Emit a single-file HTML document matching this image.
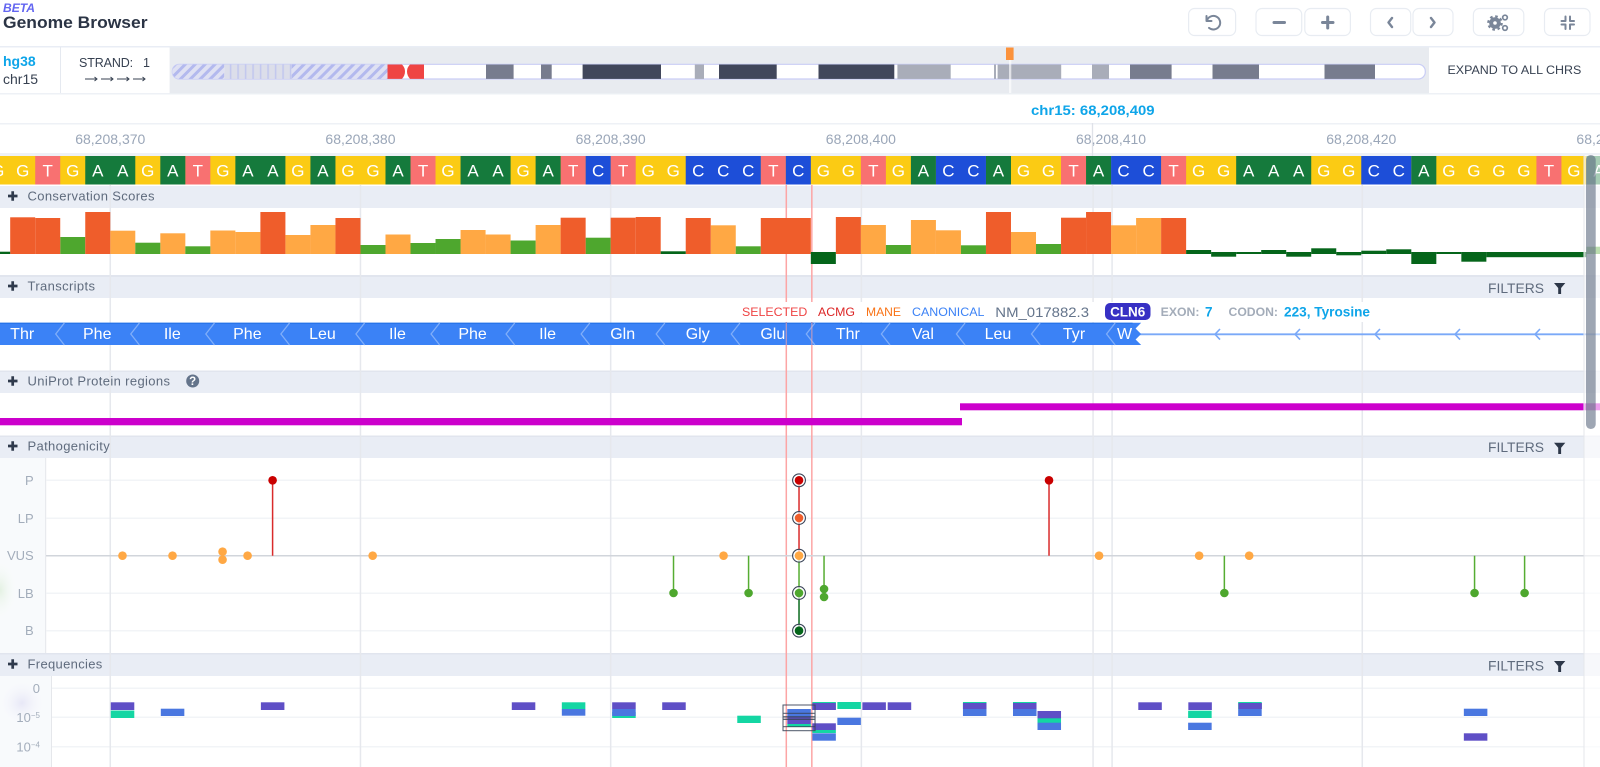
<!DOCTYPE html>
<html lang="en"><head><meta charset="utf-8"><title>Genome Browser</title>
<style>
html,body{margin:0;padding:0;background:#fff;width:1600px;height:767px;overflow:hidden}
svg{display:block;font-family:"Liberation Sans",Arial,sans-serif}
.sec{font-size:13px;fill:#5f6b7d}
.tick{font-size:14px;fill:#9aa6b8;text-anchor:middle}
.ax{font-size:13px;fill:#a3adbb;text-anchor:end}
.fil{font-size:14px;fill:#5f6b7d}
.aa{font-size:16px;fill:#fff;text-anchor:middle}
.btn{fill:#fff;stroke:#e8ecf2;stroke-width:1.2}
.ic{fill:none;stroke:#7a8699;stroke-linecap:round;stroke-linejoin:round}
</style></head><body>
<svg width="1600" height="767" viewBox="0 0 1600 767" xmlns="http://www.w3.org/2000/svg">
<defs>
<pattern id="hatch" width="7" height="7" patternUnits="userSpaceOnUse" patternTransform="rotate(45)"><rect width="7" height="7" fill="#dfe1f3"/><rect width="3" height="7" fill="#b3b9ee"/></pattern>
<pattern id="vst" width="7.500" height="10" patternUnits="userSpaceOnUse" x="224.300"><rect width="7.500" height="10" fill="#dcdeea"/><rect x="5.500" width="1.600" height="10" fill="#c3c8ee"/></pattern>
<radialGradient id="gg"><stop offset="0" stop-color="#cfe8c8" stop-opacity=".5"/><stop offset="1" stop-color="#fff" stop-opacity="0"/></radialGradient>
<radialGradient id="pg"><stop offset="0" stop-color="#d9d8f2" stop-opacity=".55"/><stop offset="1" stop-color="#fff" stop-opacity="0"/></radialGradient>
</defs>
<rect width="1600" height="767" fill="#fff"/>

<!-- header -->
<text x="3" y="12" font-size="12" font-style="italic" font-weight="bold" fill="#6366f1" textLength="32" lengthAdjust="spacingAndGlyphs">BETA</text>
<text x="3" y="28" font-size="17" font-weight="bold" fill="#2b3445" textLength="144.500" lengthAdjust="spacingAndGlyphs">Genome Browser</text>
<rect class="btn" x="1188.600" y="8.500" width="47" height="27" rx="6"/>
<rect class="btn" x="1256" y="8.500" width="45.700" height="27" rx="6"/>
<rect class="btn" x="1304.800" y="8.500" width="45.600" height="27" rx="6"/>
<rect class="btn" x="1370.500" y="8.500" width="40.200" height="27" rx="6"/>
<rect class="btn" x="1413" y="8.500" width="40" height="27" rx="6"/>
<rect class="btn" x="1473.400" y="8.500" width="50.400" height="27" rx="6"/>
<rect class="btn" x="1544.500" y="8.500" width="45.500" height="27" rx="6"/>
<path class="ic" stroke-width="2" d="M1206.500 16v5h5M1206.800 21A6.800 6.800 0 1 1 1209 27.900"/>
<path class="ic" stroke-width="3" d="M1274 22.500h10.500M1322.500 22.500h10.500M1327.700 17v11"/>
<path class="ic" stroke-width="2.400" d="M1392 18l-3.500 4.500 3.500 4.500M1431 18l3.500 4.500-3.500 4.500"/>
<circle cx="1495" cy="23" r="3.800" fill="none" stroke="#7a8699" stroke-width="4"/>
<circle cx="1495" cy="23" r="6.700" fill="none" stroke="#7a8699" stroke-width="2.200" stroke-dasharray="2.600 2.660"/>
<circle cx="1505" cy="17.500" r="2.300" fill="none" stroke="#7a8699" stroke-width="1.700"/>
<circle cx="1505" cy="28" r="2.300" fill="none" stroke="#7a8699" stroke-width="1.700"/>
<path class="ic" stroke-width="2" d="M1565.500 16.500v4.500h-4M1570 16.500v4.500h4M1565.500 29v-4.500h-4M1570 29v-4.500h4"/>

<rect x="0" y="46" width="1600" height="1.500" fill="#e9edf5"/>
<rect x="0" y="93" width="1600" height="1.500" fill="#eef1f6"/>
<rect x="60" y="47" width="1" height="46" fill="#e5e9f0"/>
<text x="3" y="66" font-size="14" font-weight="bold" fill="#0ea5e9">hg38</text>
<text x="3" y="84" font-size="14" fill="#374151">chr15</text>
<text x="79" y="67" font-size="12.500" fill="#374151" textLength="71" xml:space="preserve">STRAND:   1</text>
<path fill="none" stroke="#374151" stroke-width="1" d="M85 79h12M94.500 77l2.500 2-2.500 2M101 79h12M110.500 77l2.500 2-2.500 2M117 79h12M126.500 77l2.500 2-2.500 2M133 79h12M142.500 77l2.500 2-2.500 2"/>

<!-- ideogram -->
<rect x="169.600" y="47.300" width="1259.400" height="46" fill="#e8ebf0"/>
<rect x="172.300" y="64.300" width="1253" height="14.700" rx="7" fill="#fff" stroke="#c9cdf5" stroke-width="1.200"/>
<path d="M224.300 64.500H179.500a7 7 0 0 0 0 14.400h44.800z" fill="url(#hatch)"/>
<rect x="224.300" y="64.500" width="67.300" height="14.400" fill="url(#vst)"/>
<rect x="291.600" y="64.500" width="96" height="14.400" fill="url(#hatch)"/>
<path d="M387.500 64.500H402q3 3 3 7t-3 7.400H387.500z" fill="#ef4444"/>
<path d="M424 64.500H410q-3 3-3 7t3 7.400H424z" fill="#ef4444"/>
<g fill="#777c8e"><rect x="486" y="64.500" width="27.600" height="14.400"/><rect x="541" y="64.500" width="10.700" height="14.400"/><rect x="1130" y="64.500" width="41.600" height="14.400"/><rect x="1212.500" y="64.500" width="46.500" height="14.400"/><rect x="1324.500" y="64.500" width="50.500" height="14.400"/></g>
<g fill="#41475b"><rect x="582.600" y="64.500" width="78.400" height="14.400"/><rect x="719" y="64.500" width="57.700" height="14.400"/><rect x="818.500" y="64.500" width="75.800" height="14.400"/></g>
<g fill="#a9adb9"><rect x="694.800" y="64.500" width="9.200" height="14.400"/><rect x="897.400" y="64.500" width="53.300" height="14.400"/><rect x="994" y="64.500" width="2" height="14.400"/><rect x="997.600" y="64.500" width="63.600" height="14.400"/><rect x="1092" y="64.500" width="17" height="14.400"/></g>
<rect x="1009" y="60" width="2.300" height="33" fill="#fff" opacity=".65"/>
<rect x="1006" y="47.500" width="7.600" height="12.500" fill="#fb923c"/>
<text x="1447.500" y="74" font-size="12" fill="#374151" textLength="133.800" lengthAdjust="spacingAndGlyphs">EXPAND TO ALL CHRS</text>

<text x="1031" y="115" font-size="14" font-weight="bold" fill="#0ea5e9" textLength="123.600" lengthAdjust="spacingAndGlyphs">chr15: 68,208,409</text>
<rect x="0" y="123" width="1600" height="1.500" fill="#eef1f6"/>
<rect x="0" y="153" width="1600" height="3" fill="#eef1f6"/>
<path d="M1092.500 123V156" stroke="#dfe2e8" stroke-width="1.300"/>

<g transform="translate(-0.320 0) scale(1.0008 1)">
<text class="tick" x="110.500" y="144">68,208,370</text>
<text class="tick" x="360.500" y="144">68,208,380</text>
<text class="tick" x="610.500" y="144">68,208,390</text>
<text class="tick" x="860.500" y="144">68,208,400</text>
<text class="tick" x="1110.500" y="144">68,208,410</text>
<text class="tick" x="1360.500" y="144">68,208,420</text>
<text class="tick" x="1610.500" y="144">68,208,430</text>

<!-- bases -->
<rect x="0" y="156" width="1600" height="28.500" fill="#fbcb14"/>
<g fill="#f87171"><rect x="35.500" y="156" width="25" height="28.500"/><rect x="185.500" y="156" width="25" height="28.500"/><rect x="410.500" y="156" width="25" height="28.500"/><rect x="560.500" y="156" width="25" height="28.500"/><rect x="610.500" y="156" width="25" height="28.500"/><rect x="760.500" y="156" width="25" height="28.500"/><rect x="860.500" y="156" width="25" height="28.500"/><rect x="1060.500" y="156" width="25" height="28.500"/><rect x="1160.500" y="156" width="25" height="28.500"/><rect x="1535.500" y="156" width="25" height="28.500"/></g>
<g fill="#157a3c"><rect x="85.500" y="156" width="50" height="28.500"/><rect x="160.500" y="156" width="25" height="28.500"/><rect x="235.500" y="156" width="50" height="28.500"/><rect x="310.500" y="156" width="25" height="28.500"/><rect x="385.500" y="156" width="25" height="28.500"/><rect x="460.500" y="156" width="50" height="28.500"/><rect x="535.500" y="156" width="25" height="28.500"/><rect x="910.500" y="156" width="25" height="28.500"/><rect x="985.500" y="156" width="25" height="28.500"/><rect x="1085.500" y="156" width="25" height="28.500"/><rect x="1235.500" y="156" width="75" height="28.500"/><rect x="1410.500" y="156" width="25" height="28.500"/><rect x="1585.500" y="156" width="15" height="28.500"/></g>
<g fill="#1d4ed8"><rect x="585.500" y="156" width="25" height="28.500"/><rect x="685.500" y="156" width="75" height="28.500"/><rect x="785.500" y="156" width="25" height="28.500"/><rect x="935.500" y="156" width="50" height="28.500"/><rect x="1110.500" y="156" width="50" height="28.500"/><rect x="1360.500" y="156" width="50" height="28.500"/></g>
<text y="176.500" font-size="17" fill="#fff" text-anchor="middle" x="-2 23 48 73 98 123 148 173 198 223 248 273 298 323 348 373 398 423 448 473 498 523 548 573 598 623 648 673 698 723 748 773 798 823 848 873 898 923 948 973 998 1023 1048 1073 1098 1123 1148 1173 1198 1223 1248 1273 1298 1323 1348 1373 1398 1423 1448 1473 1498 1523 1548 1573 1598">GGTGAAGATGAAGAGGATGAAGATCTGGCCCTCGGTGACCAGGTACCTGGAAAGGCCAGGGGTGA</text>
</g>

<!-- section headers -->
<g fill="#e9edf5"><rect x="0" y="186" width="1600" height="22"/><rect x="0" y="275" width="1600" height="23"/><rect x="0" y="370.500" width="1600" height="22.500"/><rect x="0" y="435.500" width="1600" height="22.500"/><rect x="0" y="653" width="1600" height="23"/></g>
<g fill="#e1e5ee"><rect x="0" y="275" width="1600" height="2"/><rect x="0" y="370.500" width="1600" height="1.500"/><rect x="0" y="435.500" width="1600" height="1.500"/><rect x="0" y="653" width="1600" height="1.500"/></g>

<!-- axes -->
<rect x="0" y="458" width="45.700" height="195" fill="#f8fafc"/>
<rect x="0" y="676" width="51.500" height="91" fill="#f8fafc"/>
<ellipse cx="0" cy="590" rx="18" ry="32" fill="url(#gg)"/>
<circle cx="22" cy="703" r="26" fill="url(#pg)"/>
<rect x="45.200" y="458" width="1" height="195" fill="#e5e7eb"/>
<rect x="51" y="676" width="1" height="91" fill="#e5e7eb"/>
<g fill="#f2f4f7"><rect x="46" y="479.500" width="1554" height="1.500"/><rect x="46" y="517.500" width="1554" height="1.500"/><rect x="46" y="592.500" width="1554" height="1.500"/><rect x="46" y="630" width="1554" height="1.500"/><rect x="52" y="687.500" width="1548" height="1.500"/><rect x="52" y="716.500" width="1548" height="1.500"/><rect x="52" y="746" width="1548" height="1.500"/></g>
<text class="ax" x="33.700" y="485">P</text><text class="ax" x="33.700" y="523">LP</text><text class="ax" x="33.700" y="560">VUS</text><text class="ax" x="33.700" y="598">LB</text><text class="ax" x="33.700" y="635">B</text>
<text class="ax" x="40" y="693">0</text>
<text class="ax" x="40" y="722">10<tspan font-size="8" dy="-4">−5</tspan></text>
<text class="ax" x="40" y="751.500">10<tspan font-size="8" dy="-4">−4</tspan></text>

<g transform="translate(-0.320 0) scale(1.0008 1)">
<!-- grid lines -->
<g stroke="#e6e8ed" stroke-width="1.500"><path d="M110.500 185V767M360.500 185V767M610.500 185V767M861 185V767M1111.500 185V767M1361.500 185V767M1092.500 185V767"/></g>
<g stroke="#fca5a5" stroke-width="1.500"><path d="M786 185V767M811.500 185V767"/></g>

<!-- conservation -->
<g fill="#ffa844">
<rect x="110.500" y="230.700" width="25" height="23.300"/><rect x="160.500" y="233.300" width="25" height="20.700"/><rect x="210.500" y="230.500" width="25" height="23.500"/><rect x="235.500" y="232" width="25" height="22"/><rect x="285.500" y="235" width="25" height="19"/><rect x="310.500" y="225" width="25" height="29"/><rect x="385.500" y="234.500" width="25" height="19.500"/><rect x="460.500" y="230" width="25" height="24"/><rect x="485.500" y="234.500" width="25" height="19.500"/><rect x="535.500" y="225" width="25" height="29"/><rect x="710.500" y="225.300" width="25" height="28.700"/><rect x="860.500" y="225" width="25" height="29"/><rect x="910.500" y="220" width="25" height="34"/><rect x="935.500" y="230.300" width="25" height="23.700"/><rect x="1010.500" y="232" width="25" height="22"/><rect x="1110.500" y="225.300" width="25" height="28.700"/><rect x="1135.500" y="218" width="25" height="36"/></g>
<g fill="#4ea72e">
<rect x="60.500" y="237" width="25" height="17"/><rect x="135.500" y="242.700" width="25" height="11.300"/><rect x="185.500" y="246.300" width="25" height="7.700"/><rect x="360.500" y="245" width="25" height="9"/><rect x="410.500" y="243" width="25" height="11"/><rect x="435.500" y="239" width="25" height="15"/><rect x="510.500" y="240.500" width="25" height="13.500"/><rect x="585.500" y="237.700" width="25" height="16.300"/><rect x="735.500" y="246.300" width="25" height="7.700"/><rect x="885.500" y="245" width="25" height="9"/><rect x="960.500" y="245.300" width="25" height="8.700"/><rect x="1035.500" y="244" width="25" height="10"/><rect x="1585.500" y="246.700" width="15" height="7.300"/></g>
<g fill="#ef5d2b">
<rect x="10.500" y="217.300" width="25" height="36.700"/><rect x="35.500" y="218" width="25" height="36"/><rect x="85.500" y="212" width="25" height="42"/><rect x="260.500" y="212" width="25" height="42"/><rect x="335.500" y="218" width="25" height="36"/><rect x="560.500" y="217.700" width="25" height="36.300"/><rect x="610.500" y="217.700" width="25" height="36.300"/><rect x="635.500" y="217" width="25" height="37"/><rect x="685.500" y="218" width="25" height="36"/><rect x="760.500" y="218" width="50" height="36"/><rect x="835.500" y="217" width="25" height="37"/><rect x="985.500" y="212" width="25" height="42"/><rect x="1060.500" y="217.700" width="25" height="36.300"/><rect x="1085.500" y="212" width="25" height="42"/><rect x="1160.500" y="218" width="25" height="36"/></g>
<g fill="#05651a">
<rect x="0" y="251.700" width="10.500" height="2.300"/><rect x="660.500" y="251.300" width="25" height="2.700"/><rect x="810.500" y="252" width="25" height="12"/><rect x="1185.500" y="250" width="25" height="4"/><rect x="1210.500" y="252" width="25" height="4.700"/><rect x="1235.500" y="252" width="25" height="2"/><rect x="1260.500" y="250" width="25" height="4"/><rect x="1285.500" y="252" width="25" height="4.700"/><rect x="1310.500" y="248.300" width="25" height="5.700"/><rect x="1335.500" y="252" width="25" height="3.300"/><rect x="1360.500" y="250.700" width="25" height="3.300"/><rect x="1385.500" y="249.300" width="25" height="4.700"/><rect x="1410.500" y="252" width="25" height="12"/><rect x="1435.500" y="252" width="25" height="2"/><rect x="1460.500" y="252" width="25" height="9.700"/><rect x="1485.500" y="252" width="100" height="5.200"/></g>
</g>

<!-- section titles -->
<g stroke="#2f3a4c" stroke-width="2.700"><path d="M8 196h9.500M12.700 191.300v9.400M8 286h9.500M12.700 281.300v9.400M8 381h9.500M12.700 376.300v9.400M8 446h9.500M12.700 441.300v9.400M8 664h9.500M12.700 659.300v9.400"/></g>
<text class="sec" x="27.500" y="200.500" textLength="127" lengthAdjust="spacing">Conservation Scores</text>
<text class="sec" x="27.500" y="290.500" textLength="67.500" lengthAdjust="spacing">Transcripts</text>
<text class="sec" x="27.500" y="385.500" textLength="142.500" lengthAdjust="spacing">UniProt Protein regions</text>
<text class="sec" x="27.500" y="450.500" textLength="82.200" lengthAdjust="spacing">Pathogenicity</text>
<text class="sec" x="27.500" y="668.500" textLength="74.800" lengthAdjust="spacing">Frequencies</text>
<circle cx="192.700" cy="381" r="6.500" fill="#64748b"/>
<text x="192.700" y="385.200" font-size="11.500" font-weight="bold" fill="#fff" text-anchor="middle">?</text>
<text class="fil" x="1488" y="293" textLength="56" lengthAdjust="spacingAndGlyphs">FILTERS</text>
<text class="fil" x="1488" y="452" textLength="56" lengthAdjust="spacingAndGlyphs">FILTERS</text>
<text class="fil" x="1488" y="670.500" textLength="56" lengthAdjust="spacingAndGlyphs">FILTERS</text>
<g fill="#2d3748"><path d="M1554 283h11.300l-4.200 5v6h-2.900v-6z"/><path d="M1554 442.700h11.300l-4.200 5v6.300h-2.900v-6.300z"/><path d="M1554 661h11.300l-4.200 5v6h-2.900v-6z"/></g>

<!-- transcript labels -->
<rect x="742" y="302" width="640" height="20" fill="#fff"/>
<text x="742" y="316" font-size="12" fill="#ef4444" textLength="65.300" lengthAdjust="spacingAndGlyphs">SELECTED</text>
<text x="818" y="316" font-size="12" fill="#dc2626" textLength="37" lengthAdjust="spacingAndGlyphs">ACMG</text>
<text x="866" y="316" font-size="12" fill="#f97316" textLength="35" lengthAdjust="spacingAndGlyphs">MANE</text>
<text x="912" y="316" font-size="12" fill="#3b82f6" textLength="72.400" lengthAdjust="spacingAndGlyphs">CANONICAL</text>
<text x="995.300" y="317" font-size="14" fill="#64748b" textLength="93.700" lengthAdjust="spacingAndGlyphs">NM_017882.3</text>
<rect x="1105" y="303" width="45.500" height="17" rx="5" fill="#3730c4"/>
<text x="1127.700" y="316.500" font-size="13.500" font-weight="bold" fill="#fff" text-anchor="middle">CLN6</text>
<text x="1160.700" y="316" font-size="12" font-weight="bold" fill="#a3acb9" textLength="38.800" lengthAdjust="spacingAndGlyphs">EXON:</text>
<text x="1205" y="316.500" font-size="13.500" font-weight="bold" fill="#0ea5e9">7</text>
<text x="1228.500" y="316" font-size="12" font-weight="bold" fill="#a3acb9" textLength="49.500" lengthAdjust="spacingAndGlyphs">CODON:</text>
<text x="1284" y="316.500" font-size="13.500" font-weight="bold" fill="#0ea5e9" textLength="86" lengthAdjust="spacingAndGlyphs">223, Tyrosine</text>

<!-- protein -->
<path d="M1136 334.300H1600" stroke="#7aa9f8" stroke-width="1.800"/>
<path d="M1220 329l-5 5.300 5 5.300M1300 329l-5 5.300 5 5.300M1380 329l-5 5.300 5 5.300M1460 329l-5 5.300 5 5.300M1540 329l-5 5.300 5 5.300" fill="none" stroke="#7aa9f8" stroke-width="1.600"/>
<g transform="translate(-0.320 0) scale(1.0008 1)">
<path d="M0 322.700H1140.600L1135 328.500l5.500 5.500-5.500 5.500 5.600 5.500H0z" fill="#3b82f6"/>
<rect x="0" y="322.700" width="1132" height="1" fill="#1f6fe6"/>
<path d="M64.600 323L56 334l8.600 11M139.600 323L131 334l8.600 11M214.600 323L206 334l8.600 11M289.600 323L281 334l8.600 11M364.600 323L356 334l8.600 11M439.600 323L431 334l8.600 11M514.600 323L506 334l8.600 11M589.600 323L581 334l8.600 11M664.600 323L656 334l8.600 11M739.600 323L731 334l8.600 11M814.600 323L806 334l8.600 11M889.600 323L881 334l8.600 11M964.600 323L956 334l8.600 11M1039.600 323L1031 334l8.600 11M1114.600 323L1106 334l8.600 11" fill="none" stroke="#80aef9" stroke-width="1.300"/>
<text class="aa" x="22.500" y="339">Thr</text><text class="aa" x="97.500" y="339">Phe</text><text class="aa" x="172.500" y="339">Ile</text><text class="aa" x="247.500" y="339">Phe</text><text class="aa" x="322.500" y="339">Leu</text><text class="aa" x="397.500" y="339">Ile</text><text class="aa" x="472.500" y="339">Phe</text><text class="aa" x="547.500" y="339">Ile</text><text class="aa" x="622.500" y="339">Gln</text><text class="aa" x="697.500" y="339">Gly</text><text class="aa" x="772.500" y="339">Glu</text><text class="aa" x="847.500" y="339">Thr</text><text class="aa" x="922.500" y="339">Val</text><text class="aa" x="997.500" y="339">Leu</text><text class="aa" x="1073.500" y="339">Tyr</text><text class="aa" x="1124" y="339">W</text>
<path d="M786 323V345M811.500 323V345" stroke="#fca5a5" stroke-width="1.300" opacity=".6"/>
</g>

<!-- uniprot -->
<rect x="960" y="403.300" width="640" height="7" fill="#cc00cc"/>
<rect x="0" y="418" width="962" height="7.300" fill="#cc00cc"/>

<rect x="46" y="555" width="1554" height="1.500" fill="#d1d5db"/>
<g transform="translate(-0.320 0) scale(1.0008 1)">
<!-- pathogenicity -->
<g stroke-width="1.500" fill="none">
<path d="M272.700 480V555.700M1048.500 480V555.700M798.700 480V555.700" stroke="#d92b2b"/>
<path d="M673.300 555.700V593M748.300 555.700V593M823.700 555.700V597M1223.700 555.700V593M1473.700 555.700V593M1523.700 555.700V593M798.700 555.700V593" stroke="#56ad32"/>
<path d="M798.700 593V631" stroke="#0a6a1e"/>
</g>
<g fill="#ffa844"><circle cx="122.700" cy="555.700" r="4.300"/><circle cx="172.700" cy="555.700" r="4.300"/><circle cx="222.700" cy="551.700" r="4.300"/><circle cx="222.700" cy="559.700" r="4.300"/><circle cx="247.700" cy="555.700" r="4.300"/><circle cx="372.700" cy="555.700" r="4.300"/><circle cx="723.300" cy="555.700" r="4.300"/><circle cx="1098.500" cy="555.700" r="4.300"/><circle cx="1198.500" cy="555.700" r="4.300"/><circle cx="1248.500" cy="555.700" r="4.300"/></g>
<g fill="#4ea72e"><circle cx="673.300" cy="593" r="4.300"/><circle cx="748.300" cy="593" r="4.300"/><circle cx="823.700" cy="589" r="4.300"/><circle cx="823.700" cy="597" r="4.300"/><circle cx="1223.700" cy="593" r="4.300"/><circle cx="1473.700" cy="593" r="4.300"/><circle cx="1523.700" cy="593" r="4.300"/></g>
<g fill="#c90000"><circle cx="272.700" cy="480.300" r="4.300"/><circle cx="1048.500" cy="480.300" r="4.300"/></g>
<g fill="#fff" fill-opacity=".7" stroke="#3a4458" stroke-width="1.100"><circle cx="798.700" cy="480.300" r="6.400"/><circle cx="798.700" cy="518" r="6.400"/><circle cx="798.700" cy="555.700" r="6.400"/><circle cx="798.700" cy="593" r="6.400"/><circle cx="798.700" cy="630.700" r="6.400"/></g>
<circle cx="798.700" cy="480.300" r="4.300" fill="#c90000"/><circle cx="798.700" cy="518" r="4.300" fill="#ef5d2b"/><circle cx="798.700" cy="555.700" r="4.300" fill="#ffa844"/><circle cx="798.700" cy="593" r="4.300" fill="#4ea72e"/><circle cx="798.700" cy="630.700" r="4.300" fill="#05651a"/>

<!-- frequencies -->
<g fill="#14d6a3"><rect x="111" y="710.500" width="23.500" height="7.500"/><rect x="561.700" y="702.300" width="23.500" height="7"/><rect x="612" y="712" width="23.500" height="6"/><rect x="737" y="715.700" width="23.500" height="7.300"/><rect x="837" y="702" width="23.500" height="7"/><rect x="812" y="702" width="23.500" height="8"/><rect x="962.500" y="702" width="23.500" height="7"/><rect x="1012.500" y="702" width="23.500" height="7"/><rect x="1037" y="718" width="23.500" height="5"/><rect x="1187.500" y="710.700" width="23.500" height="7.300"/><rect x="1237.500" y="702" width="23.500" height="7"/><rect x="812" y="730" width="23.500" height="3"/></g>
<g fill="#4a77e0"><rect x="161" y="708.700" width="23.500" height="7.300"/><rect x="561.700" y="709" width="23.500" height="6.700"/><rect x="612" y="709" width="23.500" height="7"/><rect x="837" y="717.700" width="23.500" height="7.300"/><rect x="812" y="733.300" width="23.500" height="7.400"/><rect x="962.500" y="709" width="23.500" height="7"/><rect x="1012.500" y="709" width="23.500" height="7"/><rect x="1037" y="722.700" width="23.500" height="7.300"/><rect x="1187.500" y="722.700" width="23.500" height="7.300"/><rect x="1237.500" y="709" width="23.500" height="7"/><rect x="1463" y="708.700" width="23.500" height="7.300"/><rect x="787" y="709" width="23.500" height="8"/></g>
<g fill="#5f4fc6"><rect x="111" y="702.300" width="23.500" height="7.700"/><rect x="261" y="702.300" width="23.500" height="7.700"/><rect x="511.700" y="702.300" width="23.500" height="7.700"/><rect x="612" y="702.300" width="23.500" height="6.700"/><rect x="662" y="702.300" width="23.500" height="7.700"/><rect x="812" y="703" width="23.500" height="7"/><rect x="862" y="702.300" width="23.500" height="7.700"/><rect x="887.300" y="702.300" width="23.500" height="7.700"/><rect x="812" y="723.300" width="23.500" height="6.700"/><rect x="962.500" y="703" width="23.500" height="6"/><rect x="1012.500" y="703" width="23.500" height="6"/><rect x="1037" y="711" width="23.500" height="7.300"/><rect x="1137.700" y="702.300" width="23.500" height="7.700"/><rect x="1187.700" y="702.300" width="23.500" height="7.700"/><rect x="1237.700" y="703" width="23.500" height="6"/><rect x="1463" y="733.300" width="23.500" height="7.400"/><rect x="787" y="717" width="23.500" height="7"/></g>
<rect x="787" y="724" width="23.500" height="3" fill="#14d6a3"/>
<g fill="none" stroke="#3a4458" stroke-width="1" opacity=".9"><rect x="782.700" y="705" width="32" height="12"/><rect x="782.700" y="713.300" width="32" height="6"/><rect x="782.700" y="716.700" width="32" height="10"/><rect x="782.700" y="719.300" width="32" height="11.400"/></g>
</g>

<!-- right edge fade and scrollbar -->
<rect x="1584" y="155" width="16" height="612" fill="#fff" opacity=".62"/>
<rect x="1583.500" y="155" width="1" height="612" fill="#e5e7eb"/>
<rect x="1586" y="155" width="9.700" height="274" rx="4.800" fill="#5d6b80" opacity=".6"/>
</svg>
</body></html>
